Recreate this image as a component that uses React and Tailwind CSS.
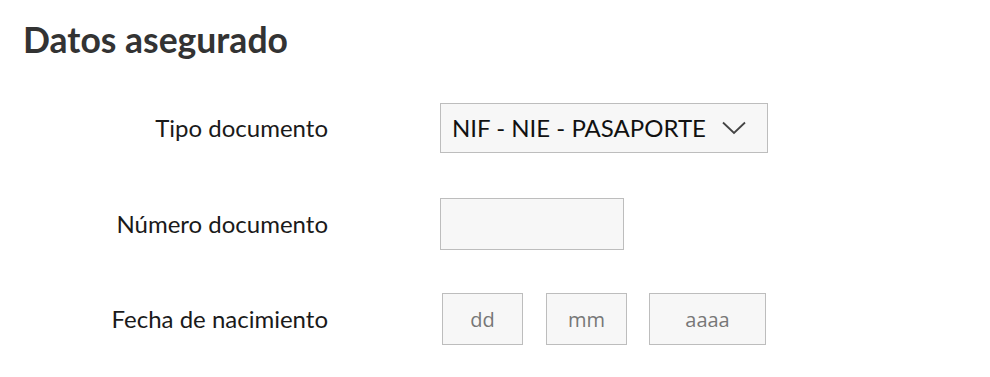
import React from "react";

const labelCls = "w-[328px] shrink-0 text-right text-[24px] text-[#1a1a1a]";
const dateCls = "h-[52px] border border-[#bdbdbd] bg-[#f7f7f7] text-center outline-none placeholder:text-[#777777]";

export default function App() {
  return (
    <div className="w-[990px] h-[377px] bg-white font-['Lato',sans-serif] overflow-hidden">
      <h1 className="pl-[23px] pt-[19px] text-[35.5px] leading-[42px] font-bold text-[#333333]">
        Datos asegurado
      </h1>
      <div className="mt-[42px] flex flex-col">
        <div className="flex items-center h-[50px]">
          <label className={labelCls}>Tipo documento</label>
          <div className="ml-[112px] w-[328px] h-[50px] border border-[#bdbdbd] bg-[#f7f7f7] flex items-center pl-[11px] pr-[21px]">
            <span className="text-[24px] text-[#111111] flex-1">NIF - NIE - PASAPORTE</span>
            <svg width="24" height="14" viewBox="0 0 24 14" fill="none" stroke="#444" strokeWidth="1.8">
              <path d="M1 1.5 L12 12 L23 1.5" />
            </svg>
          </div>
        </div>
        <div className="flex items-center h-[52px] mt-[45px]">
          <label className={labelCls}>Número documento</label>
          <input className="ml-[112px] w-[184px] h-[52px] border border-[#bdbdbd] bg-[#f7f7f7] outline-none" />
        </div>
        <div className="flex items-center h-[52px] mt-[43px]">
          <label className={labelCls}>Fecha de nacimiento</label>
          <div className="ml-[114px] flex font-['Open_Sans',sans-serif] text-[20px] text-[#777777]">
            <input placeholder="dd" className={`w-[81px] ${dateCls}`} />
            <input placeholder="mm" className={`ml-[23px] w-[81px] ${dateCls}`} />
            <input placeholder="aaaa" className={`ml-[22px] w-[117px] ${dateCls}`} />
          </div>
        </div>
      </div>
    </div>
  );
}
